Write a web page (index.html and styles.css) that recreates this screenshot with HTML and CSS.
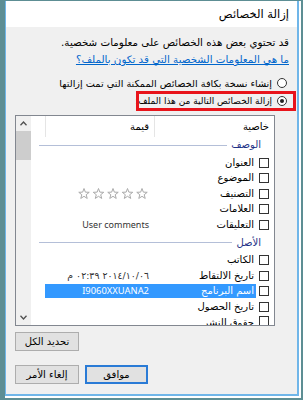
FILE: index.html
```html
<!DOCTYPE html>
<html lang="ar" dir="rtl">
<head>
<meta charset="utf-8">
<link rel="stylesheet" href="styles.css">
</head>
<body>
<div class="outer">
  <div class="win">
    <div class="title">إزالة الخصائص</div>
    <div class="content">
      <p class="intro">قد تحتوي بعض هذه الخصائص على معلومات شخصية.</p>
      <a class="link" href="#">ما هي المعلومات الشخصية التي قد تكون بالملف؟</a>
      <div class="radio-row first"><span class="radio"></span><span>إنشاء نسخة بكافة الخصائص الممكنة التي تمت إزالتها</span></div>
      <div class="radio-row second"><span class="radio checked"></span><span>إزالة الخصائص التالية من هذا الملف:</span><span class="mark"></span></div>
      <div class="listbox">
        <div class="lv">
          <div class="lv-head">
            <div class="h-prop">خاصية</div>
            <div class="h-val">قيمة</div>
            <div class="h-fill"></div>
          </div>
          <div class="lv-body">
            <div class="group"><span class="g-text">الوصف</span><span class="g-line"></span></div>
            <div class="row"><span class="cb-cell"><span class="cb"></span></span><span class="cells"><span class="c-label">العنوان</span><span class="c-value"></span></span></div>
            <div class="row"><span class="cb-cell"><span class="cb"></span></span><span class="cells"><span class="c-label">الموضوع</span><span class="c-value"></span></span></div>
            <div class="row"><span class="cb-cell"><span class="cb"></span></span><span class="cells"><span class="c-label">التصنيف</span><span class="c-value"><svg class="stars" width="71" height="12" viewBox="0 0 71 12"><g fill="none" stroke="#aaaaaa" stroke-width="1"><polygon points="6,0.5 7.35,4.14 11.23,4.3 8.19,6.71 9.23,10.45 6,8.3 2.77,10.45 3.81,6.71 0.77,4.3 4.65,4.14"/><polygon transform="translate(14.5 0)" points="6,0.5 7.35,4.14 11.23,4.3 8.19,6.71 9.23,10.45 6,8.3 2.77,10.45 3.81,6.71 0.77,4.3 4.65,4.14"/><polygon transform="translate(29 0)" points="6,0.5 7.35,4.14 11.23,4.3 8.19,6.71 9.23,10.45 6,8.3 2.77,10.45 3.81,6.71 0.77,4.3 4.65,4.14"/><polygon transform="translate(43.5 0)" points="6,0.5 7.35,4.14 11.23,4.3 8.19,6.71 9.23,10.45 6,8.3 2.77,10.45 3.81,6.71 0.77,4.3 4.65,4.14"/><polygon transform="translate(58 0)" points="6,0.5 7.35,4.14 11.23,4.3 8.19,6.71 9.23,10.45 6,8.3 2.77,10.45 3.81,6.71 0.77,4.3 4.65,4.14"/></g></svg></span></span></div>
            <div class="row"><span class="cb-cell"><span class="cb"></span></span><span class="cells"><span class="c-label">العلامات</span><span class="c-value"></span></span></div>
            <div class="row"><span class="cb-cell"><span class="cb"></span></span><span class="cells"><span class="c-label">التعليقات</span><span class="c-value latin">User comments</span></span></div>
            <div class="group g2"><span class="g-text">الأصل</span><span class="g-line"></span></div>
            <div class="row"><span class="cb-cell"><span class="cb"></span></span><span class="cells"><span class="c-label">الكاتب</span><span class="c-value"></span></span></div>
            <div class="row"><span class="cb-cell"><span class="cb"></span></span><span class="cells"><span class="c-label">تاريخ الالتقاط</span><span class="c-value"><span class="visual">م ٠٢:٣٩ ٢٠١٤/١٠/٠٦</span></span></span></div>
            <div class="row selected"><span class="cb-cell"><span class="cb"></span></span><span class="cells"><span class="c-label">اسم البرنامج</span><span class="c-value latin">I9060XXUANA2</span></span></div>
            <div class="row"><span class="cb-cell"><span class="cb"></span></span><span class="cells"><span class="c-label">تاريخ الحصول</span><span class="c-value"></span></span></div>
            <div class="row last"><span class="cb-cell"><span class="cb"></span></span><span class="cells"><span class="c-label">حقوق النشر</span><span class="c-value"></span></span></div>
          </div>
        </div>
        <div class="sb">
          <div class="sb-btn"><svg width="7" height="5" viewBox="0 0 7 5"><polyline points="0.5,4.2 3.5,1 6.5,4.2" fill="none" stroke="#505050" stroke-width="1.3"/></svg></div>
          <div class="sb-thumb"></div>
          <div class="sb-track"></div>
          <div class="sb-btn"><svg width="7" height="5" viewBox="0 0 7 5"><polyline points="0.5,0.8 3.5,4 6.5,0.8" fill="none" stroke="#505050" stroke-width="1.3"/></svg></div>
        </div>
      </div>
      <button class="btn select-all" type="button">تحديد الكل</button>
      <div class="actions">
        <button class="btn default" type="button">موافق</button>
        <button class="btn" type="button">إلغاء الأمر</button>
      </div>
    </div>
  </div>
</div>
</body>
</html>
```
FILE: styles.css
```css
* { box-sizing: border-box; }
html, body { margin: 0; padding: 0; }
body {
  width: 303px;
  height: 400px;
  overflow: hidden;
  background: #5d8e94;
  font-family: "DejaVu Sans", sans-serif;
  font-size: 10px;
  color: #000;
}
.outer {
  margin: 1px 2px 0 5px;
  width: 296px;
  height: 397px;
  background: #fff;
  padding: 0 2px 2px 0;
}
.win {
  height: 395px;
  border-left: 1px solid #70b6e9;
  border-right: 2px solid #70b6e9;
  border-bottom: 2px solid #70b6e9;
  background: #f0f0f0;
  display: flex;
  flex-direction: column;
}
.title {
  height: 26px;
  flex: none;
  background: #fff;
  padding-right: 8px;
  line-height: 26px;
  font-size: 11.5px;
}
.content {
  padding: 0 8px 0 9px;
}
.intro {
  margin: 7px 0 0;
  line-height: 16px;
  font-size: 10.3px;
}
.link {
  display: block;
  margin-top: 1px;
  line-height: 16px;
  font-size: 10.3px;
  color: #0066cc;
  text-decoration: underline;
}
.radio-row {
  display: flex;
  align-items: center;
  gap: 5px;
  height: 18px;
  padding-right: 2px;
  white-space: nowrap;
}
.radio-row.first { margin-top: 7px; font-size: 9.7px; }
.radio-row.second { position: relative; font-size: 9px; }
.radio {
  flex: none;
  width: 10px;
  height: 10px;
  border: 1px solid #333;
  border-radius: 50%;
  background: #fff;
  display: flex;
  align-items: center;
  justify-content: center;
}
.radio.checked::after {
  content: "";
  width: 4px;
  height: 4px;
  border-radius: 50%;
  background: #222;
}
.mark {
  position: absolute;
  left: 121px;
  top: -1px;
  width: 160px;
  height: 20px;
  border: 3px solid #e8141b;
}
.listbox {
  margin-top: 5px;
  margin-right: 14px;
  width: 260px;
  height: 211px;
  border: 1px solid #828790;
  background: #fff;
  display: flex;
}
.lv {
  flex: 1;
  display: flex;
  flex-direction: column;
  overflow: hidden;
}
.lv-head {
  flex: none;
  display: flex;
  height: 21px;
  line-height: 21px;
}
.h-prop {
  width: 120px;
  padding-right: 5px;
  border-left: 1px solid #e5e5e5;
}
.h-val {
  width: 109px;
  padding-right: 5px;
  border-left: 1px solid #e5e5e5;
}
.h-fill { flex: 1; }
.lv-body {
  flex: 1;
  overflow: hidden;
}
.group {
  display: flex;
  align-items: center;
  height: 18px;
  padding-bottom: 2px;
  padding-right: 13px;
  color: #1e3287;
  line-height: 16px;
}
.group.g2 { margin-top: 2px; }
.g-line {
  flex: 1;
  height: 1px;
  background: #b4bfd8;
  margin: 0 4px 0 8px;
}
.row {
  display: flex;
  align-items: center;
  height: 15.5px;
  white-space: nowrap;
}
.row.last { align-items: flex-start; padding-top: 1px; }
.cb-cell {
  flex: none;
  width: 18px;
  padding-right: 5px;
  display: flex;
}
.cb {
  width: 10px;
  height: 10px;
  border: 1px solid #333;
  background: #fff;
}
.cells {
  flex: none;
  display: flex;
  width: 211px;
  height: 14px;
  line-height: 14px;
}
.c-label {
  width: 102px;
  padding-right: 2px;
}
.c-value {
  width: 109px;
  padding-right: 5px;
  display: flex;
  align-items: center;
}
.latin {
  font-family: "Noto Sans", sans-serif;
  font-size: 9px;
  color: #333;
}
.visual {
  direction: ltr;
  unicode-bidi: bidi-override;
  color: #333;
  font-size: 9.4px;
}
.row.selected .cells {
  background: #3399ff;
  color: #fff;
}
.row.selected .latin { color: #fff; font-size: 9.4px; }
.stars { display: block; }
.sb {
  flex: none;
  width: 15px;
  background: #f0f0f0;
  display: flex;
  flex-direction: column;
}
.sb-btn {
  height: 15px;
  display: flex;
  align-items: center;
  justify-content: center;
}
.sb-thumb {
  height: 29px;
  background: #cdcdcd;
}
.sb-track { flex: 1; }
.btn {
  display: block;
  height: 19px;
  padding: 0;
  font-family: "DejaVu Sans", sans-serif;
  font-size: 10px;
  color: #000;
  background: #e1e1e1;
  border: 1px solid #adadad;
  line-height: 17px;
}
.select-all {
  width: 64px;
  margin: 6px auto 0 0;
}
.actions {
  margin-top: 14px;
  display: flex;
  justify-content: flex-end;
  gap: 6px;
}
.actions .btn { width: 64px; }
.actions .btn.default {
  width: 63px;
  border: 1px solid #2a7bd6;
  box-shadow: inset 0 0 0 1px #2a7bd6;
}
```
